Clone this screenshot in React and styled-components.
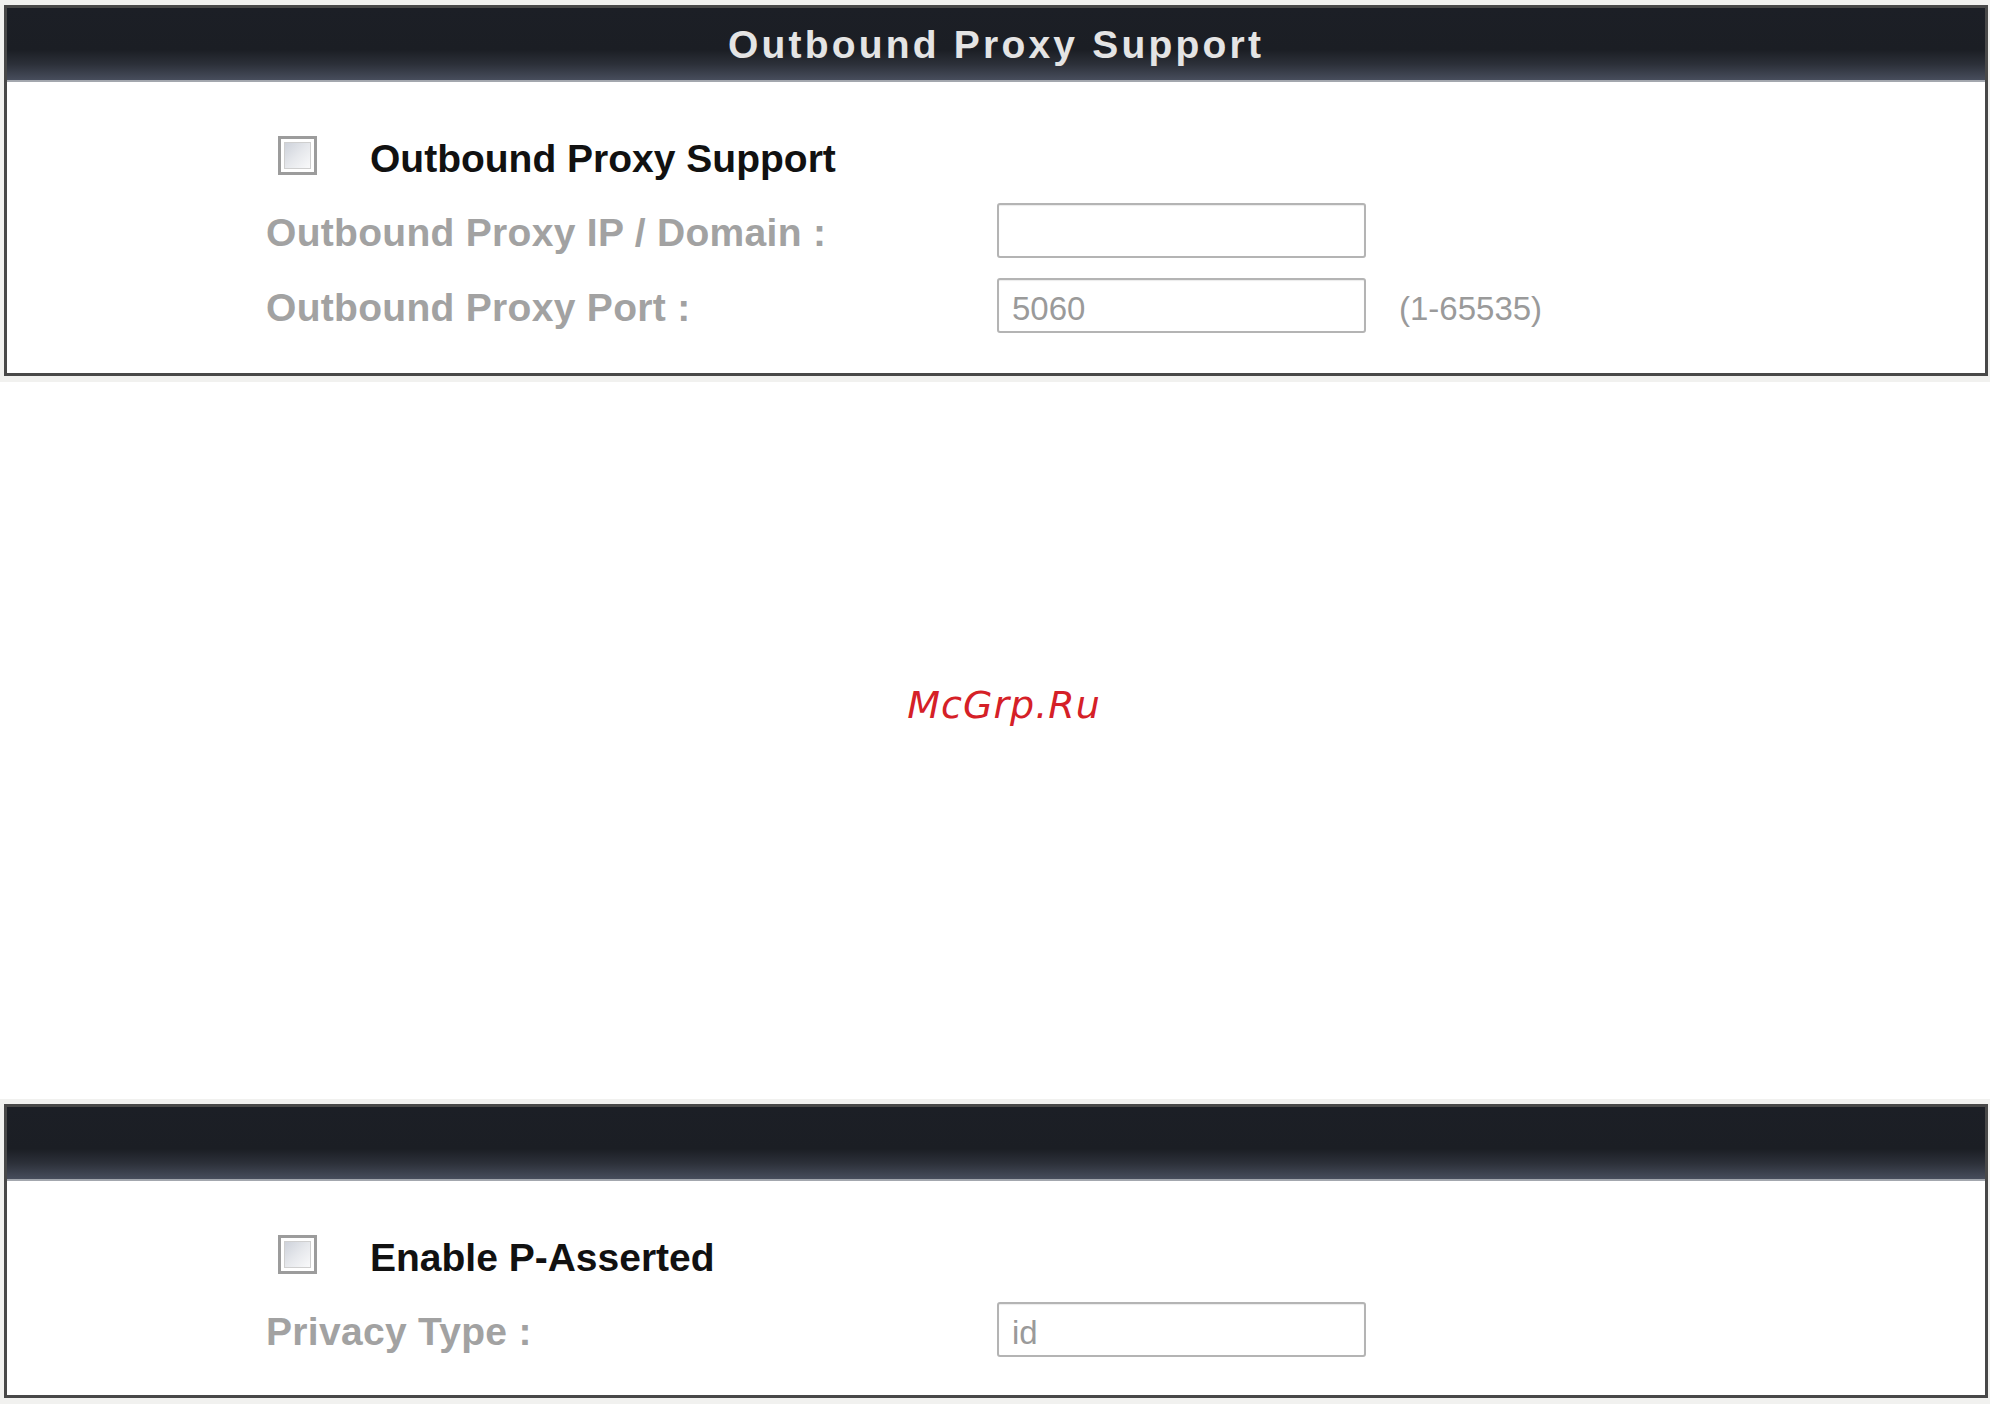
import React from 'react'
import styled, { createGlobalStyle } from 'styled-components'

const GlobalStyle = createGlobalStyle`
    html, body {
        margin: 0;
        padding: 0;
        background: #ffffff;
    }
    body {
        font-family: "Liberation Sans", Arial, sans-serif;
        width: 1996px;
        height: 1406px;
        overflow: hidden;
    }
`

const Page = styled.div`
    display: flex;
    flex-direction: column;
    width: 1996px;
`

const Frame = styled.div`
    background: #f1f1ef;
    padding: 5px 2px 6px 4px;
    margin-right: 6px;
`

const Panel = styled.section`
    border: 3px solid #484848;
    background: #ffffff;
    display: flex;
    flex-direction: column;
`

const Header = styled.div`
    height: 70px;
    display: flex;
    align-items: center;
    justify-content: center;
    background: linear-gradient(to bottom, #1c1f26 0%, #1b1e24 58%, #2c3039 78%, #474d5c 100%);
    border-bottom: 2px solid #a3a7ae;
    color: #e4e4e4;
    font-size: 39px;
    font-weight: bold;
    letter-spacing: 3.2px;
    padding-top: 2px;
`

const Body = styled.div`
    display: flex;
    flex-direction: column;
    padding: 36px 0 ${p => p.$bottom}px 259px;
`

const Row = styled.div`
    height: 75px;
    display: flex;
    align-items: center;
`

const Check = styled.input.attrs({ type: 'checkbox' })`
    appearance: none;
    margin: 0 0 0 12px;
    width: 39px;
    height: 39px;
    box-sizing: border-box;
    border: 3px solid #9c9c9c;
    background: linear-gradient(135deg, #c6cbd5 0%, #e6e8ec 50%, #ffffff 100%);
    box-shadow: inset 0 0 0 3px #ffffff, inset 0 0 0 4px #cfcfcf;
`

const CheckLabel = styled.span`
    margin-left: 53px;
    padding-top: 6px;
    font-size: 39px;
    font-weight: bold;
    color: #111111;
    line-height: 1;
`

const FieldLabel = styled.span`
    width: 731px;
    padding-top: 4px;
    font-size: 39px;
    font-weight: bold;
    letter-spacing: 0.3px;
    color: #a2a2a2;
    line-height: 1;
`

const Field = styled.input`
    width: 369px;
    height: 55px;
    box-sizing: border-box;
    border: 2px solid #b4b4b4;
    border-radius: 3px;
    box-shadow: inset 0 1px 1px rgba(0, 0, 0, 0.08);
    padding: 6px 0 0 13px;
    font-family: "Liberation Sans", Arial, sans-serif;
    font-size: 33px;
    color: #9a9a9a;
    background: #ffffff;
    outline: none;
`

const Hint = styled.span`
    margin-left: 33px;
    padding-top: 6px;
    font-size: 33px;
    color: #9a9a9a;
    line-height: 1;
`

const Gap = styled.div`
    height: 717px;
    display: flex;
    justify-content: center;
    box-sizing: border-box;
    padding-top: 304px;
    padding-left: 12px;
`

const Watermark = styled.span`
    font-family: "DejaVu Sans", sans-serif;
    font-style: italic;
    font-size: 38px;
    line-height: 1;
    letter-spacing: 1px;
    color: #d52027;
`

export default function App() {
    return (
        <Page>
            <GlobalStyle />
            <Frame>
                <Panel>
                    <Header>Outbound Proxy Support</Header>
                    <Body $bottom={30}>
                        <Row>
                            <Check />
                            <CheckLabel>Outbound Proxy Support</CheckLabel>
                        </Row>
                        <Row>
                            <FieldLabel>Outbound Proxy IP / Domain :</FieldLabel>
                            <Field defaultValue="" />
                        </Row>
                        <Row>
                            <FieldLabel>Outbound Proxy Port :</FieldLabel>
                            <Field defaultValue="5060" />
                            <Hint>(1-65535)</Hint>
                        </Row>
                    </Body>
                </Panel>
            </Frame>
            <Gap>
                <Watermark>McGrp.Ru</Watermark>
            </Gap>
            <Frame>
                <Panel>
                    <Header />
                    <Body $bottom={28}>
                        <Row>
                            <Check />
                            <CheckLabel>Enable P-Asserted</CheckLabel>
                        </Row>
                        <Row>
                            <FieldLabel>Privacy Type :</FieldLabel>
                            <Field defaultValue="id" />
                        </Row>
                    </Body>
                </Panel>
            </Frame>
        </Page>
    )
}
